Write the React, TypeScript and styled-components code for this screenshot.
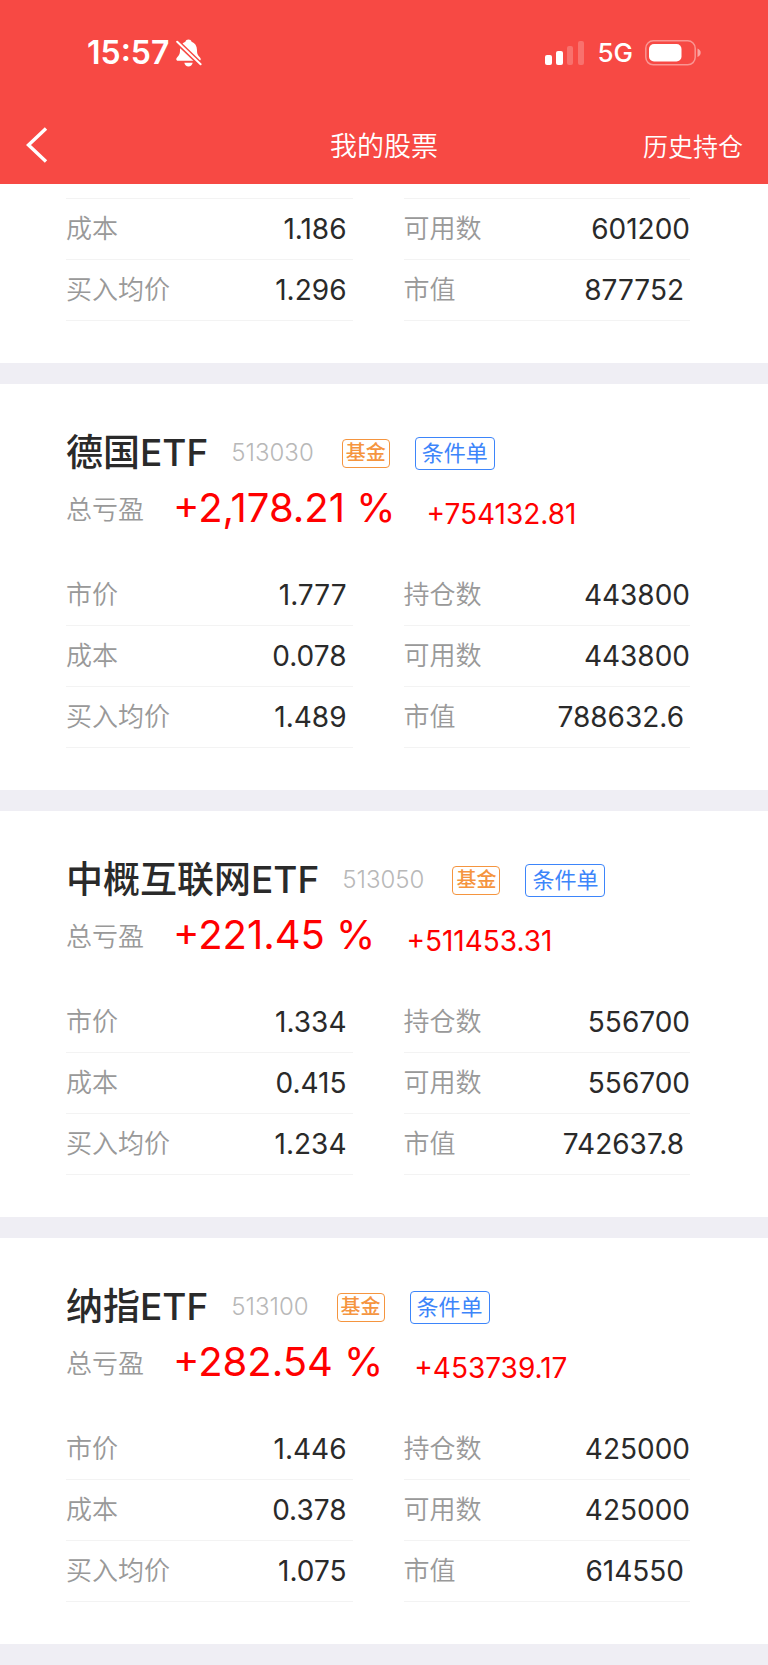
import React from 'react';
import styled, { createGlobalStyle } from 'styled-components';

const color = {
  brand: '#f74944',
  page: '#efeef4',
  card: '#ffffff',
  line: '#f3f3f3',
  ink: '#2a2a2a',
  label: '#999999',
  code: '#b8b8b8',
  gain: '#ff0000',
  fund: '#f5953f',
  order: '#3d85fa',
};

const GlobalStyle = createGlobalStyle`
  *, *::before, *::after { box-sizing: border-box; }
  body {
    margin: 0;
    background: ${color.page};
    color: ${color.ink};
    font-family: Inter, "Noto Sans CJK SC", sans-serif;
  }
  h1, h2, p, dl, dd { margin: 0; }
`;

const Header = styled.header`
  background: ${color.brand};
  color: #ffffff;
`;

const StatusBar = styled.div`
  display: flex;
  align-items: center;
  justify-content: space-between;
  height: 105px;
  padding: 0 67px 0 87px;
`;

const StatusGroup = styled.div<{ $gap: number }>`
  display: flex;
  align-items: center;
  gap: ${({ $gap }) => $gap}px;
`;

const Clock = styled.time`
  font-size: 32px;
  font-weight: 600;
  line-height: 40px;
`;

const Network = styled.span`
  font-size: 26px;
  font-weight: 500;
  line-height: 32px;
`;

const NavBar = styled.nav`
  display: grid;
  grid-template-columns: 1fr auto 1fr;
  align-items: center;
  height: 79px;
  padding: 0 25px;
`;

const BackButton = styled.button`
  display: flex;
  justify-self: start;
  padding: 0;
  border: 0;
  background: none;
  color: inherit;
`;

const Title = styled.h1`
  padding-top: 4px;
  font-size: 27px;
  font-weight: 350;
  line-height: 40px;
`;

const NavLink = styled.a`
  justify-self: end;
  padding-top: 4px;
  color: inherit;
  font-size: 25px;
  font-weight: 350;
  line-height: 40px;
  text-decoration: none;
`;

const List = styled.main`
  display: flex;
  flex-direction: column;
  gap: 21px;
  padding-bottom: 21px;
`;

const Card = styled.section<{ $continued?: boolean }>`
  padding: ${({ $continued }) => ($continued ? '14px' : '47px')} 78px 42px 66px;
  background: ${color.card};
`;

const NameRow = styled.div`
  display: flex;
  align-items: center;
  height: 44px;
`;

const Name = styled.h2`
  font-size: 37px;
  font-weight: 500;
  line-height: 44px;
`;

const Code = styled.span`
  margin: 0 28px 0 23px;
  color: ${color.code};
  font-size: 24px;
  font-weight: 300;
  line-height: 32px;
`;

const FundTag = styled.span`
  margin-right: 25px;
  padding: 0 3px;
  border: 1px solid ${color.fund};
  border-radius: 4px;
  color: ${color.fund};
  font-size: 20px;
  font-weight: 500;
  line-height: 27px;
`;

const OrderButton = styled.button`
  padding: 0 6px;
  border: 1px solid ${color.order};
  border-radius: 4px;
  background: none;
  color: ${color.order};
  font-family: inherit;
  font-size: 22px;
  line-height: 31px;
`;

const ProfitRow = styled.p`
  display: flex;
  align-items: center;
  height: 66px;
  color: ${color.gain};
`;

const ProfitLabel = styled.span`
  padding-top: 4px;
  color: ${color.label};
  font-size: 26px;
  font-weight: 350;
  line-height: 40px;
`;

const Percent = styled.strong`
  margin: 0 31px 0 29px;
  font-size: 40px;
  font-weight: 400;
  line-height: 48px;
`;

const Amount = styled.span`
  padding-top: 12px;
  font-size: 28px;
  line-height: 36px;
`;

const Details = styled.div<{ $continued?: boolean }>`
  display: grid;
  grid-template-columns: 1fr 1fr;
  column-gap: 51px;
  margin-top: ${({ $continued }) => ($continued ? '0' : '24px')};
`;

const Column = styled.dl<{ $continued?: boolean }>`
  border-top: ${({ $continued }) => ($continued ? `1px solid ${color.line}` : '0')};
`;

const Row = styled.div`
  display: flex;
  align-items: center;
  justify-content: space-between;
  height: 61px;
  border-bottom: 1px solid ${color.line};
`;

const Label = styled.dt`
  color: ${color.label};
  font-size: 26px;
  font-weight: 350;
  line-height: 40px;
`;

const Value = styled.dd<{ $inset: boolean }>`
  padding-right: ${({ $inset }) => ($inset ? '6px' : '0')};
  font-size: 28px;
  line-height: 40px;
`;

function BellOffIcon() {
  return (
    <svg width="26" height="28" viewBox="0 0 26 28" aria-hidden="true">
      <path
        fill="#fff"
        d="M12.5.5c-1.5 0-2.7.9-3.1 2.3C6 4 4 7 4 11c0 4-.8 5.2-2.8 7.2C-.3 19.8 0 21.8 2 21.8h21c2 0 2.3-2 .8-3.6-2-2-2.8-3.2-2.8-7.2 0-4-2-7-5.4-8.2C15.2 1.4 14 .5 12.5.5Z"
      />
      <path fill="#fff" d="M8.3 23.7h8.4c-.5 2.3-2.1 3.7-4.2 3.7s-3.7-1.4-4.2-3.7Z" />
      <path stroke={color.brand} strokeWidth="5" d="M-1 .7 27 27.6" />
      <path stroke="#fff" strokeWidth="2" strokeLinecap="round" d="M1.2 2.8 24.6 25.3" />
    </svg>
  );
}

function SignalIcon() {
  return (
    <svg width="40" height="26" viewBox="0 0 40 26" fill="#fff" aria-hidden="true">
      <rect x="0" y="15" width="7" height="10" rx="2" />
      <rect x="11" y="11" width="7" height="14" rx="2" />
      <rect x="22" y="6" width="6" height="19" rx="2" opacity=".22" />
      <rect x="33" y="1" width="6" height="24" rx="2" opacity=".22" />
    </svg>
  );
}

function BatteryIcon() {
  return (
    <svg width="56" height="26" viewBox="0 0 56 26" fill="none" aria-hidden="true">
      <rect x=".8" y=".8" width="49.4" height="24" rx="7.5" stroke="#fff" strokeOpacity=".42" strokeWidth="1.5" />
      <rect x="4" y="4" width="32.5" height="17.5" rx="5" fill="#fff" />
      <path d="M52.5 8.5c2 .8 3.2 2.3 3.2 4.2s-1.2 3.4-3.2 4.2Z" fill="#fff" fillOpacity=".5" />
    </svg>
  );
}

function BackIcon() {
  return (
    <svg width="24" height="36" viewBox="0 0 24 36" fill="none" aria-hidden="true">
      <path d="M21 1.5 3.5 18 21 34.5" stroke="#fff" strokeWidth="3.4" />
    </svg>
  );
}

type Entry = [label: string, value: string];

interface Holding {
  name: string;
  code: string;
  percent: string;
  amount: string;
  left: Entry[];
  right: Entry[];
}

const firstHolding: Pick<Holding, 'left' | 'right'> = {
  left: [['成本', '1.186'], ['买入均价', '1.296']],
  right: [['可用数', '601200'], ['市值', '877752']],
};

const holdings: Holding[] = [
  {
    name: '德国ETF',
    code: '513030',
    percent: '+2,178.21 %',
    amount: '+754132.81',
    left: [['市价', '1.777'], ['成本', '0.078'], ['买入均价', '1.489']],
    right: [['持仓数', '443800'], ['可用数', '443800'], ['市值', '788632.6']],
  },
  {
    name: '中概互联网ETF',
    code: '513050',
    percent: '+221.45 %',
    amount: '+511453.31',
    left: [['市价', '1.334'], ['成本', '0.415'], ['买入均价', '1.234']],
    right: [['持仓数', '556700'], ['可用数', '556700'], ['市值', '742637.8']],
  },
  {
    name: '纳指ETF',
    code: '513100',
    percent: '+282.54 %',
    amount: '+453739.17',
    left: [['市价', '1.446'], ['成本', '0.378'], ['买入均价', '1.075']],
    right: [['持仓数', '425000'], ['可用数', '425000'], ['市值', '614550']],
  },
];

function DetailGrid({ left, right, continued }: { left: Entry[]; right: Entry[]; continued?: boolean }) {
  return (
    <Details $continued={continued}>
      {[left, right].map((entries, column) => (
        <Column key={column} $continued={continued}>
          {entries.map(([label, value]) => (
            <Row key={label}>
              <Label>{label}</Label>
              <Value $inset={column === 0 || label === '市值'}>{value}</Value>
            </Row>
          ))}
        </Column>
      ))}
    </Details>
  );
}

export default function App() {
  return (
    <>
      <GlobalStyle />
      <Header>
        <StatusBar>
          <StatusGroup $gap={7}>
            <Clock>15:57</Clock>
            <BellOffIcon />
          </StatusGroup>
          <StatusGroup $gap={12}>
            <SignalIcon />
            <Network>5G</Network>
            <BatteryIcon />
          </StatusGroup>
        </StatusBar>
        <NavBar>
          <BackButton type="button" aria-label="返回">
            <BackIcon />
          </BackButton>
          <Title>我的股票</Title>
          <NavLink href="#history">历史持仓</NavLink>
        </NavBar>
      </Header>
      <List>
        <Card $continued>
          <DetailGrid left={firstHolding.left} right={firstHolding.right} continued />
        </Card>
        {holdings.map((item) => (
          <Card key={item.code}>
            <NameRow>
              <Name>{item.name}</Name>
              <Code>{item.code}</Code>
              <FundTag>基金</FundTag>
              <OrderButton type="button">条件单</OrderButton>
            </NameRow>
            <ProfitRow>
              <ProfitLabel>总亏盈</ProfitLabel>
              <Percent>{item.percent}</Percent>
              <Amount>{item.amount}</Amount>
            </ProfitRow>
            <DetailGrid left={item.left} right={item.right} />
          </Card>
        ))}
      </List>
    </>
  );
}
